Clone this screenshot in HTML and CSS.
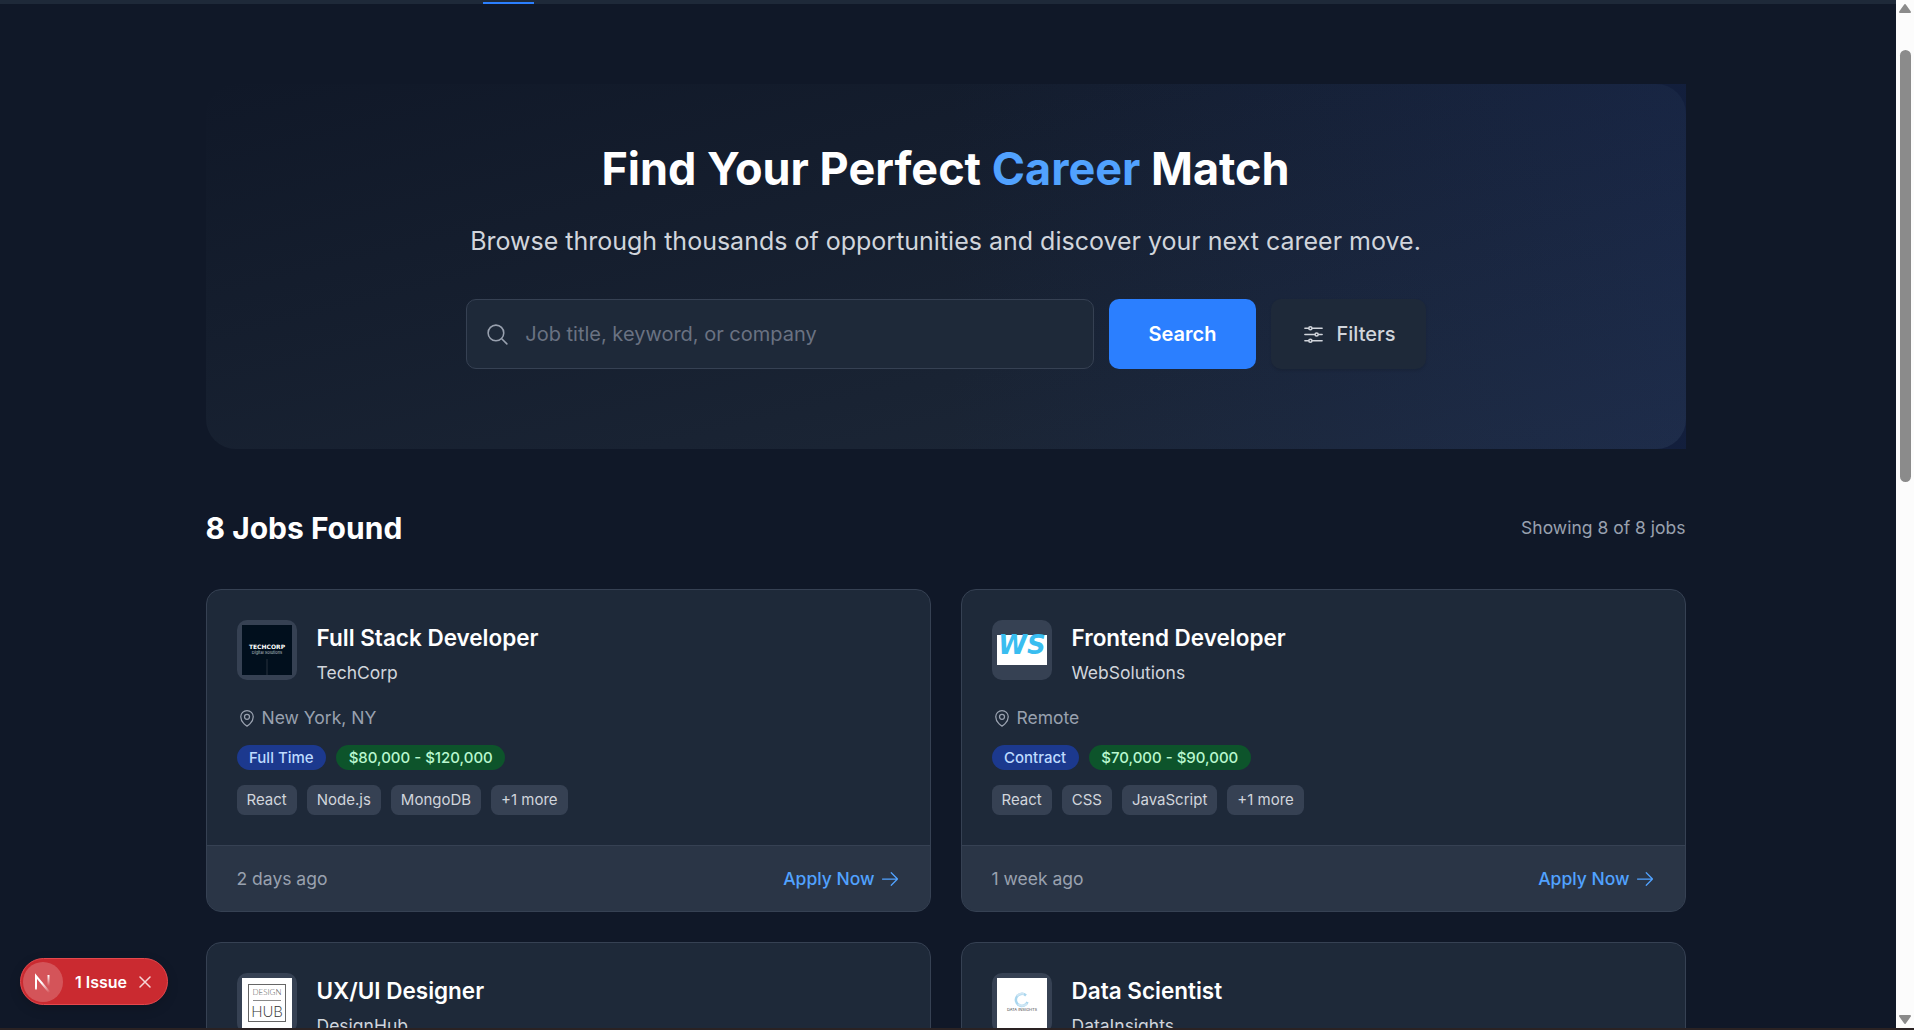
FILE: index.html
```html
<!DOCTYPE html>
<html lang="en">
<head>
<meta charset="utf-8">
<meta name="viewport" content="width=device-width, initial-scale=1">
<title>Find Jobs</title>
<link rel="stylesheet" href="styles.css">
</head>
<body>
<svg class="sprite" aria-hidden="true">
  <symbol id="icon-search" viewBox="0 0 24 24"><path d="m21 21-5.197-5.197m0 0A7.5 7.5 0 1 0 5.196 5.196a7.5 7.5 0 0 0 10.607 10.607Z"/></symbol>
  <symbol id="icon-filters" viewBox="0 0 24 24"><path d="M10.5 6h9.75M10.5 6a1.5 1.5 0 1 1-3 0m3 0a1.5 1.5 0 1 0-3 0M3.75 6H7.5m3 12h9.75m-9.75 0a1.5 1.5 0 0 1-3 0m3 0a1.5 1.5 0 0 0-3 0m-3.75 0H7.5m9-6h3.75m-3.75 0a1.5 1.5 0 0 1-3 0m3 0a1.5 1.5 0 0 0-3 0m-9.75 0h9.75"/></symbol>
  <symbol id="icon-pin" viewBox="0 0 24 24"><path d="M15 10.5a3 3 0 1 1-6 0 3 3 0 0 1 6 0Z"/><path d="M19.5 10.5c0 7.142-7.5 11.25-7.5 11.25S4.5 17.642 4.5 10.5a7.5 7.5 0 1 1 15 0Z"/></symbol>
  <symbol id="icon-arrow" viewBox="0 0 24 24"><path d="M13.5 4.5 21 12m0 0-7.5 7.5M21 12H3"/></symbol>
</svg>

<div class="window">
  <div class="view">
    <header class="topbar">
      <nav class="topbar-nav"><a class="topbar-link" href="#jobs" aria-label="Jobs"></a></nav>
    </header>

    <main class="page">
      <section class="hero">
        <div class="hero-inner">
          <h1 class="hero-title">Find Your Perfect <span class="accent">Career</span> Match</h1>
          <p class="hero-text">Browse through thousands of opportunities and discover your next career move.</p>
          <form class="search">
            <label class="search-field">
              <svg class="icon icon-lg"><use href="#icon-search"/></svg>
              <input class="search-input" type="text" aria-label="Search jobs" placeholder="Job title, keyword, or company">
            </label>
            <button class="btn btn-primary" type="button">Search</button>
            <button class="btn btn-secondary" type="button"><svg class="icon icon-lg"><use href="#icon-filters"/></svg>Filters</button>
          </form>
        </div>
      </section>

      <div class="results-head" id="jobs">
        <h2 class="results-title">8 Jobs Found</h2>
        <p class="results-count">Showing 8 of 8 jobs</p>
      </div>

      <section class="jobs">
        <article class="card">
          <div class="card-body">
            <div class="card-head">
              <div class="logo">
                <svg viewBox="0 0 50 50" role="img" aria-label="TechCorp">
                  <rect width="50" height="50" fill="#010f1d"/>
                  <rect x="24" y="34" width="2" height="16" fill="#14202d"/>
                  <text class="logo-techcorp" x="25" y="24">TECHCORP</text>
                  <text class="logo-techcorp-sub" x="25" y="29">Digital Solutions</text>
                </svg>
              </div>
              <div>
                <h3 class="card-title">Full Stack Developer</h3>
                <p class="card-company">TechCorp</p>
              </div>
            </div>
            <p class="card-place"><svg class="icon"><use href="#icon-pin"/></svg>New York, NY</p>
            <div class="row badges"><span class="badge badge-type">Full Time</span><span class="badge badge-pay">$80,000 - $120,000</span></div>
            <ul class="row tags"><li class="tag">React</li><li class="tag">Node.js</li><li class="tag">MongoDB</li><li class="tag">+1 more</li></ul>
          </div>
          <footer class="card-foot"><span>2 days ago</span><a class="apply" href="#apply">Apply Now<svg class="icon"><use href="#icon-arrow"/></svg></a></footer>
        </article>

        <article class="card">
          <div class="card-body">
            <div class="card-head">
              <div class="logo">
                <svg viewBox="0 0 50 50" role="img" aria-label="WebSolutions">
                  <rect y="10" width="50" height="30" fill="#fff"/>
                  <text class="logo-ws" x="25" y="29">WS</text>
                </svg>
              </div>
              <div>
                <h3 class="card-title">Frontend Developer</h3>
                <p class="card-company">WebSolutions</p>
              </div>
            </div>
            <p class="card-place"><svg class="icon"><use href="#icon-pin"/></svg>Remote</p>
            <div class="row badges"><span class="badge badge-type">Contract</span><span class="badge badge-pay">$70,000 - $90,000</span></div>
            <ul class="row tags"><li class="tag">React</li><li class="tag">CSS</li><li class="tag">JavaScript</li><li class="tag">+1 more</li></ul>
          </div>
          <footer class="card-foot"><span>1 week ago</span><a class="apply" href="#apply">Apply Now<svg class="icon"><use href="#icon-arrow"/></svg></a></footer>
        </article>

        <article class="card">
          <div class="card-body">
            <div class="card-head">
              <div class="logo">
                <svg viewBox="0 0 50 50" role="img" aria-label="DesignHub">
                  <rect width="50" height="50" fill="#fff"/>
                  <rect x="6.5" y="6.5" width="37" height="37" fill="none" stroke="#666"/>
                  <path d="M11 22.500h28" stroke="#888"/>
                  <text class="logo-design" x="25" y="17">DESIGN</text>
                  <text class="logo-hub" x="25" y="39">HUB</text>
                </svg>
              </div>
              <div>
                <h3 class="card-title">UX/UI Designer</h3>
                <p class="card-company">DesignHub</p>
              </div>
            </div>
          </div>
        </article>

        <article class="card">
          <div class="card-body">
            <div class="card-head">
              <div class="logo">
                <svg viewBox="0 0 50 50" role="img" aria-label="DataInsights">
                  <rect width="50" height="50" fill="#fff"/>
                  <path d="M29 17.500a6 6 0 1 0 1.500 6.500" fill="none" stroke="#a9d6ee" stroke-width="2.500"/>
                  <path d="M27 16a6 6 0 0 0-7 2M21 26a6 6 0 0 0 9-.500" fill="none" stroke="#cfe6f4" stroke-width="2"/>
                  <text class="logo-data" x="25" y="33">DATA INSIGHTS</text>
                </svg>
              </div>
              <div>
                <h3 class="card-title">Data Scientist</h3>
                <p class="card-company">DataInsights</p>
              </div>
            </div>
          </div>
        </article>
      </section>
    </main>

    <div class="issue">
      <button class="issue-mark" type="button" aria-label="Open dev tools">
        <svg viewBox="0 0 40 40" aria-hidden="true">
          <defs>
            <linearGradient id="fade-diagonal" gradientUnits="userSpaceOnUse" x1="20" y1="20" x2="27" y2="30"><stop stop-color="#fff"/><stop offset="1" stop-color="#fff" stop-opacity="0"/></linearGradient>
            <linearGradient id="fade-stem" gradientUnits="userSpaceOnUse" x1="0" y1="13" x2="0" y2="24"><stop stop-color="#fff"/><stop offset="1" stop-color="#fff" stop-opacity="0"/></linearGradient>
          </defs>
          <path d="M13 27.500V14L26.500 30.500" fill="none" stroke="url(#fade-diagonal)" stroke-width="2"/>
          <path d="M25.500 13v11" stroke="url(#fade-stem)" stroke-width="2"/>
        </svg>
      </button>
      <button class="issue-text" type="button">1 Issue</button>
      <button class="issue-close" type="button" aria-label="Dismiss">
        <svg viewBox="0 0 12 12" aria-hidden="true"><path d="m1 1 10 10M11 1 1 11"/></svg>
      </button>
    </div>
  </div>

  <div class="scrollbar" aria-hidden="true">
    <svg class="scroll-arrow" viewBox="0 0 14 10"><path d="M7 1.500 12 8.500H2Z"/></svg>
    <div class="scroll-track"><div class="scroll-thumb"></div></div>
    <svg class="scroll-arrow" viewBox="0 0 14 10"><path d="M7 8.500 12 1.500H2Z"/></svg>
  </div>
</div>
</body>
</html>
```
FILE: styles.css
```css
:root {
  --gray-300: #d1d5dc;
  --gray-400: #99a1af;
  --gray-500: #6a7282;
  --gray-700: #364153;
  --gray-800: #1e2939;
  --gray-900: #101828;
  --blue-400: #51a2ff;
  --blue-500: #2b7fff;
}

* {
  box-sizing: border-box;
  margin: 0;
  padding: 0;
}

body {
  background: var(--gray-900);
  color: #fff;
  font-family: Inter, "Liberation Sans", sans-serif;
}

button,
input {
  border: 0;
  background: none;
  color: inherit;
  font: inherit;
}

button {
  cursor: pointer;
}

a {
  color: inherit;
  text-decoration: none;
}

ul {
  list-style: none;
}

.sprite {
  position: absolute;
  width: 0;
  height: 0;
}

.icon {
  width: 16px;
  height: 16px;
  flex: none;
  fill: none;
  stroke: currentColor;
  stroke-width: 1.5;
  stroke-linecap: round;
  stroke-linejoin: round;
}

.icon-lg {
  width: 20px;
  height: 20px;
}

/* Window frame */
.window {
  display: flex;
  height: 100vh;
  overflow: hidden;
  border-bottom: 2px solid #2a2223;
}

.view {
  position: relative;
  flex: 1;
  min-width: 0;
  overflow: hidden;
}

.topbar {
  height: 4px;
  padding: 0 210px 0 206px;
  background: var(--gray-800);
}

.topbar-nav {
  display: flex;
  align-items: flex-end;
  height: 100%;
  padding-left: 277px;
}

.topbar-link {
  width: 51px;
  height: 2px;
  background: var(--blue-500);
}

/* Page content, shown at 125% */
.page {
  zoom: 1.25;
  max-width: 1280px;
  margin: 0 auto;
  padding: 64px 50px 0 46px;
}

/* Hero */
.hero {
  position: relative;
  padding: 48px 48px 64px;
  border-radius: 24px;
  background: linear-gradient(to bottom right in oklab, var(--gray-900), var(--gray-800));
}

.hero::before {
  content: "";
  position: absolute;
  inset: 0 0 0 50%;
  background: linear-gradient(to left in oklab, rgb(28 57 142 / 20%), rgb(28 57 142 / 0%));
}

.hero-inner {
  position: relative;
  max-width: 768px;
  margin: 0 auto;
  text-align: center;
}

.hero-title {
  margin-bottom: 24px;
  font-size: 36px;
  line-height: 40px;
  font-weight: 700;
}

.accent {
  color: var(--blue-400);
}

.hero-text {
  margin-bottom: 32px;
  color: var(--gray-300);
  font-size: 20px;
  line-height: 28px;
  white-space: nowrap;
}

.search {
  display: flex;
  gap: 12px;
}

.search-field {
  display: flex;
  flex: 1;
  align-items: center;
  gap: 12px;
  height: 56px;
  padding: 0 15px;
  border: 1px solid var(--gray-700);
  border-radius: 8px;
  background: var(--gray-800);
  color: var(--gray-400);
}

.search-input {
  flex: 1;
  min-width: 0;
  height: 100%;
  color: #fff;
  font-size: 16px;
  outline: none;
}

.search-input::placeholder {
  color: var(--gray-500);
}

.btn {
  display: flex;
  align-items: center;
  gap: 8px;
  border-radius: 8px;
  font-size: 16px;
  font-weight: 500;
}

.btn-primary {
  padding: 0 32px;
  background: var(--blue-500);
  font-weight: 600;
}

.btn-secondary {
  padding: 0 24px;
  background: var(--gray-800);
  color: var(--gray-300);
  box-shadow: 0 1px 2px rgb(0 0 0 / 10%);
}

/* Results */
.results-head {
  display: flex;
  justify-content: space-between;
  align-items: center;
  margin: 47px 0 33px;
}

.results-title {
  font-size: 24px;
  line-height: 32px;
  font-weight: 700;
}

.results-count {
  color: var(--gray-400);
  font-size: 14px;
  line-height: 20px;
}

.jobs {
  display: grid;
  grid-template-columns: 1fr 1fr;
  gap: 24px;
}

.card {
  overflow: hidden;
  border: 1px solid var(--gray-700);
  border-radius: 12px;
  background: var(--gray-800);
  font-size: 14px;
  line-height: 20px;
}

.card-body {
  padding: 24px;
}

.card-head {
  display: flex;
  gap: 16px;
  margin-bottom: 16px;
}

.logo {
  width: 48px;
  height: 48px;
  padding: 4px;
  border-radius: 8px;
  background: var(--gray-700);
}

.logo svg {
  display: block;
  width: 100%;
  height: 100%;
}

.logo text {
  text-anchor: middle;
}

.logo-techcorp {
  fill: #fff;
  font: 700 6px "DejaVu Sans", sans-serif;
}

.logo-techcorp-sub {
  fill: #b9c0c8;
  font: 400 4px Inter, sans-serif;
}

.logo-ws {
  fill: #39bdf0;
  font: italic 700 26px "DejaVu Sans", sans-serif;
}

.logo-design {
  fill: #555;
  font: 300 8px Lato, sans-serif;
}

.logo-hub {
  fill: #333;
  font: 300 15px Lato, sans-serif;
}

.logo-data {
  fill: #444;
  font: 400 4px Inter, sans-serif;
}

.card-title {
  margin-bottom: 4px;
  font-size: 18px;
  line-height: 28px;
  font-weight: 600;
}

.card-company {
  color: var(--gray-300);
}

.card-place {
  display: flex;
  align-items: center;
  gap: 4px;
  color: var(--gray-400);
}

.row {
  display: flex;
  flex-wrap: wrap;
  gap: 8px;
  margin-top: 12px;
  font-size: 12px;
  line-height: 16px;
}

.badge {
  padding: 2px 10px;
  border-radius: 10px;
  font-weight: 500;
}

.badge-type {
  background: #1c398e;
  color: #bedbff;
}

.badge-pay {
  background: #0d542b;
  color: #b9f8cf;
}

.tag {
  padding: 4px 8px;
  border-radius: 6px;
  background: var(--gray-700);
  color: var(--gray-300);
}

.card-foot {
  display: flex;
  justify-content: space-between;
  padding: 16px 24px;
  border-top: 1px solid var(--gray-700);
  background: rgb(54 65 83 / 50%);
  color: var(--gray-400);
}

.apply {
  display: flex;
  align-items: center;
  gap: 4px;
  color: var(--blue-400);
  font-weight: 500;
}

/* Dev issue pill, floating over the page */
.issue {
  position: absolute;
  left: 20px;
  bottom: 23px;
  display: flex;
  align-items: center;
  height: 47px;
  padding: 0 16px 0 2px;
  border: 1px solid #e5484d;
  border-radius: 24px;
  background: #ca2a30;
  box-shadow: 0 4px 12px rgb(0 0 0 / 15%);
}

.issue-mark {
  width: 40px;
  height: 40px;
  margin-right: 12px;
  border-radius: 50%;
  background: rgb(255 255 255 / 20%);
}

.issue-mark svg,
.issue-close svg {
  display: block;
  width: 100%;
}

.issue-text {
  margin-right: 12px;
  font-size: 16px;
  line-height: 20px;
  font-weight: 600;
}

.issue-close {
  width: 12px;
  height: 12px;
}

.issue-close svg {
  fill: none;
  stroke: #f6d5d6;
  stroke-width: 1.5;
  stroke-linecap: round;
}

/* Scroll bar */
.scrollbar {
  display: flex;
  flex-direction: column;
  align-items: center;
  gap: 4px;
  width: 18px;
  padding: 3px 0;
  background: #fcfcfc;
}

.scroll-arrow {
  width: 14px;
  height: 11px;
  flex: none;
  fill: #8b8b8b;
  stroke: #8b8b8b;
  stroke-width: 2;
  stroke-linejoin: round;
}

.scroll-track {
  flex: 1;
  width: 11px;
  padding-top: 32px;
}

.scroll-thumb {
  height: 45%;
  border-radius: 6px;
  background: #8b8b8b;
}
```
